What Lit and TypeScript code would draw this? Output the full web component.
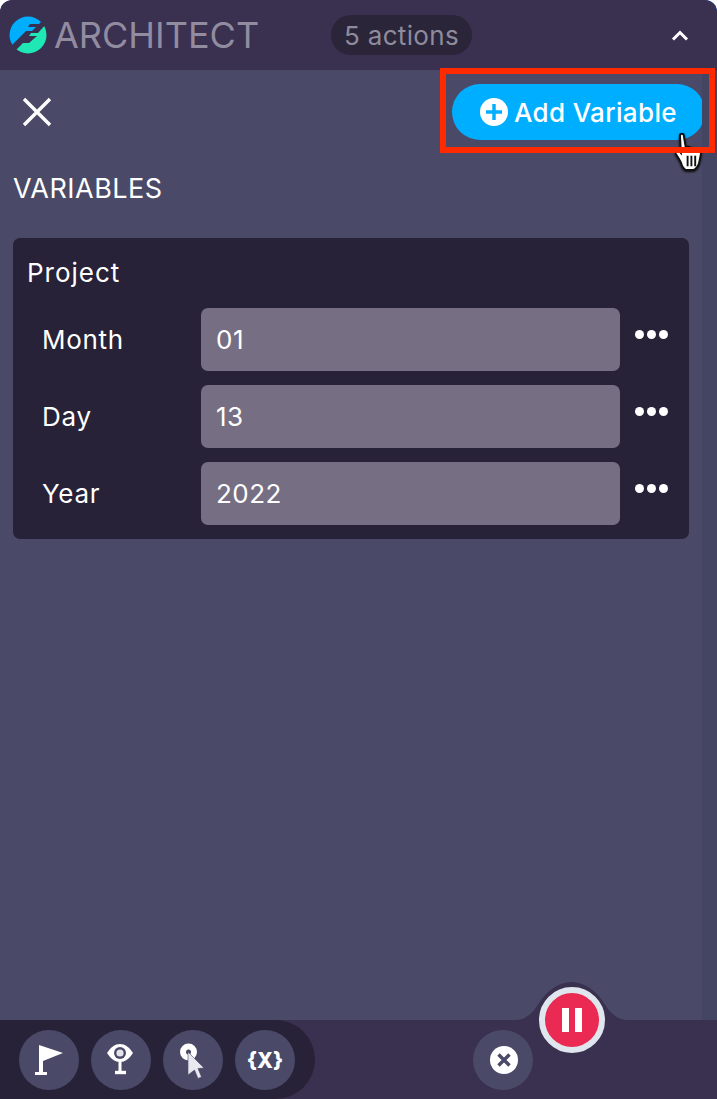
import { LitElement, html, css } from "lit";
import { customElement } from "lit/decorators.js";

const rows = [
  { label: "Month", value: "01" },
  { label: "Day", value: "13" },
  { label: "Year", value: "2022" },
];

@customElement("app-root")
export class AppRoot extends LitElement {
  static styles = css`
    :host { display: block; width: 717px; height: 1099px; font-family: Inter, "Liberation Sans", sans-serif; overflow: hidden; background: #fff; }
    .app { position: relative; width: 717px; height: 1099px; display: flex; flex-direction: column; background: #4a4a68; border-radius: 12px 12px 0 0; overflow: hidden; }
    .corner-blue { position: absolute; right: 0; top: 0; width: 14px; height: 14px; background: #1f6fe0; z-index: 0; }
    .head { position: relative; z-index: 1; height: 70px; flex: none; background: #3a3050; border-radius: 12px 12px 0 0; display: flex; align-items: center; padding-left: 9px; box-sizing: border-box; }
    .logo { width: 38px; height: 38px; flex: none; margin-right: 7px; }
    .brand { font-size: 36px; line-height: 40px; color: #918c9f; width: 277px; flex: none; white-space: nowrap; }
    .pill { height: 40px; width: 141px; box-sizing: border-box; flex: none; border-radius: 20px; background: #2a2539; color: #8f8b9d; font-size: 26px; letter-spacing: .35px; display: flex; align-items: center; justify-content: center; }
    .chev { margin-left: 197px; width: 22px; height: 14px; flex: none; }
    .main { position: relative; flex: 1; min-height: 0; display: flex; }
    .content { flex: 1; min-width: 0; display: flex; flex-direction: column; padding: 0 13px; }
    .rail { width: 15px; flex: none; background: #444563; }
    .tools { display: flex; justify-content: space-between; align-items: center; height: 84px; padding: 0 0 0 9px; }
    .close { width: 30px; height: 30px; display: block; margin-top: -1px; }
    .add { height: 56px; width: 253px; margin-right: -16px; box-sizing: border-box; border: 0; border-radius: 28px; background: #00aeff; color: #fff; font: 500 26px Inter, "Liberation Sans", sans-serif; letter-spacing: .35px; display: flex; align-items: center; padding: 0 0 0 28px; gap: 6px; }
    .add svg { width: 28px; height: 28px; flex: none; }
    .title { margin: 0; padding-top: 20px; font: 400 27px/30px Inter, "Liberation Sans", sans-serif; letter-spacing: .5px; color: #fff; }
    .card { margin-top: 34px; width: 676px; height: 301px; background: #272238; border-radius: 7px; box-sizing: border-box; padding: 20px 14px 14px 14px; display: flex; flex-direction: column; }
    .card h3 { margin: 0; font: 400 26px/30px Inter, "Liberation Sans", sans-serif; letter-spacing: 1px; color: #fff; }
    .rows { display: flex; flex-direction: column; gap: 14px; margin-top: 20px; }
    .row { display: grid; grid-template-columns: 174px 419px 1fr; height: 63px; align-items: center; }
    .row label { padding-left: 15px; color: #fff; font-size: 26px; letter-spacing: .7px; }
    .val { height: 63px; background: #766f84; border-radius: 7px; color: #fff; font-size: 26px; letter-spacing: .5px; display: flex; align-items: center; padding-left: 15px; box-sizing: border-box; }
    .dots { display: flex; gap: 3px; margin-left: 15px; margin-top: -11px; }
    .dots i { width: 9px; height: 9px; border-radius: 50%; background: #fff; display: block; }
    .bar { position: relative; height: 79px; flex: none; background: #3a3050; display: flex; align-items: stretch; }
    .left { width: 315px; box-sizing: border-box; background: #272238; border-radius: 0 40px 40px 0; display: flex; align-items: center; gap: 12px; padding-left: 19px; }
    .ib { width: 60px; height: 60px; border-radius: 50%; background: #4a4a68; display: flex; align-items: center; justify-content: center; flex: none; position: relative; }
    .ib svg { width: 60px; height: 60px; display: block; }
    .x { position: absolute; left: 473px; top: 10px; }
    .notch { position: absolute; left: 515px; top: -38px; width: 113px; height: 38px; display: block; }
    .pause { position: absolute; left: 539px; top: -33px; width: 66px; height: 66px; box-sizing: border-box; border-radius: 50%; background: #ea2a52; border: 6px solid #e0e6ee; display: flex; align-items: center; justify-content: center; gap: 6px; }
    .pause i { width: 7px; height: 24px; background: #fff; display: block; }
    .hand { position: absolute; left: 675px; top: 133px; width: 29px; height: 38px; z-index: 2; filter: drop-shadow(0 1px 1px rgba(0,0,0,.9)); }
    .frame { position: absolute; left: 440px; top: 68px; width: 275px; height: 85px; box-sizing: border-box; border: 6px solid #ff2a00; z-index: 3; pointer-events: none; }
  `;

  render() {
    return html`<div class="app">
      <div class="corner-blue"></div>
      <header class="head">
        <svg class="logo" viewBox="0 0 38 38">
          <defs><clipPath id="lc"><circle cx="19" cy="19" r="18.5"/></clipPath></defs>
          <g clip-path="url(#lc)">
            <path d="M0 0H38L30 8H21L19 11H27L23 15H17L2 30H0Z" fill="#00aeff"/>
            <path d="M38 7L29 17H22L20 20H28L20 27H14L7 34L6 38H38Z" fill="#1fe8b4"/>
          </g>
        </svg>
        <div class="brand">ARCHITECT</div>
        <div class="pill">5 actions</div>
        <svg class="chev" viewBox="0 0 22 14"><path d="M4 11.5L11 4.5L18 11.5" fill="none" stroke="#fff" stroke-width="3"/></svg>
      </header>
      <div class="main">
        <div class="content">
          <div class="tools">
            <svg class="close" viewBox="0 0 30 30"><path d="M2 2L28 28M28 2L2 28" stroke="#fff" stroke-width="3.4"/></svg>
            <button class="add">
              <svg viewBox="0 0 28 28"><circle cx="14" cy="14" r="14" fill="#fff"/><path d="M14 6V22M6 14H22" stroke="#00aeff" stroke-width="3.4"/></svg>
              Add Variable
            </button>
          </div>
          <h2 class="title">VARIABLES</h2>
          <section class="card">
            <h3>Project</h3>
            <div class="rows">
              ${rows.map((r) => html`<div class="row">
                <label>${r.label}</label>
                <div class="val">${r.value}</div>
                <div class="dots"><i></i><i></i><i></i></div>
              </div>`)}
            </div>
          </section>
        </div>
        <div class="rail"></div>
      </div>
      <footer class="bar">
        <div class="left">
          <div class="ib"><svg viewBox="0 0 60 60"><path d="M20 15L44 23L24 31V42H28V45H16V42H20Z" fill="#fff"/></svg></div>
          <div class="ib"><svg viewBox="0 0 60 60"><path d="M16 23C20 17 24 14 29 14C34 14 38 17 42 23C38 29 34 32 29 32C24 32 20 29 16 23Z" fill="#fff"/><circle cx="29" cy="23" r="6" fill="#4a4a68"/><circle cx="29" cy="23" r="3.6" fill="#e4e4ea"/><path d="M29 31V42" stroke="#fff" stroke-width="3"/><path d="M24 42.500H35" stroke="#fff" stroke-width="3.4"/></svg></div>
          <div class="ib"><svg viewBox="0 0 60 60"><circle cx="25.500" cy="22" r="5.500" fill="none" stroke="#fff" stroke-width="6"/><path d="M25 22L41 38L35 38.500L38.500 47L35 48.500L31.500 40L25 45Z" fill="#e8e8f0" stroke="#4a4a68" stroke-width=".6"/></svg></div>
          <div class="ib"><svg viewBox="0 0 60 60"><text x="30" y="37.500" text-anchor="middle" font-family="Inter, 'Liberation Sans', sans-serif" font-weight="800" font-size="21" fill="#fff">{X}</text></svg></div>
        </div>
        <div class="ib x"><svg viewBox="0 0 60 60"><circle cx="31" cy="30" r="14" fill="#fff"/><path d="M25.500 24.500L36.500 35.500M36.500 24.500L25.500 35.500" stroke="#4a4a68" stroke-width="3.4"/></svg></div>
        <svg class="notch" viewBox="0 0 113 38"><path d="M0 38C10 38 17 32 22 24C31 9 43 0 56.500 0C70 0 82 9 91 24C96 32 103 38 113 38Z" fill="#3a3050"/></svg>
        <div class="pause"><i></i><i></i></div>
      </footer>
      <div class="frame"></div>
      <svg class="hand" viewBox="0 0 30 40">
        <path d="M5 3C5 0 9 0 9 3L11 15C13 14 15 14 17 16C19 15 21 16 22 18C24 18 27 19 27 22L25 32C24 35 22 38 19 39H11C8 37 7 35 6 31C4 27 2 24 0 21C0 18 2 17 4 19L6 21Z" fill="#fff" stroke="#111" stroke-width="2"/>
        <path d="M13 24V35M17 24V35M21 24V35" stroke="#111" stroke-width="2"/>
      </svg>
    </div>`;
  }
}
